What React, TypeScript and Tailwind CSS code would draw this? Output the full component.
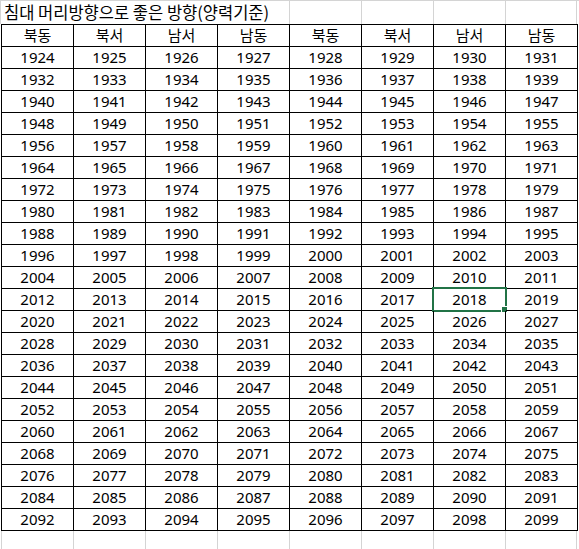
const heads = ["북동", "북서", "남서", "남동", "북동", "북서", "남서", "남동"];

const rows: number[][] = Array.from({ length: 22 }, (_, r) =>
  Array.from({ length: 8 }, (_, c) => 1924 + r * 8 + c)
);

const font = { fontFamily: '"Noto Sans", "Noto Sans CJK KR", sans-serif' };
const kr = { fontFamily: '"Noto Sans CJK KR", sans-serif' };

export default function App() {
  return (
    <div className="w-[579px] h-[549px] bg-white overflow-hidden text-black" style={font}>
      {/* title row, text runs over the first four cells */}
      <div className="flex h-[24px] border-t border-[#d4d4d4]">
        <div className="w-[289px] border-l border-[#d4d4d4] pl-[3px] text-[16.5px] leading-[22px] whitespace-nowrap" style={kr}>
          침대 머리방향으로 좋은 방향(양력기준)
        </div>
        {[0, 1, 2, 3].map((i) => (
          <div key={i} className={"w-[72px] border-l border-[#d4d4d4] " + (i === 3 ? "border-r" : "")} />
        ))}
      </div>

      <div className="ml-[1px] w-[577px] border-l border-t border-black grid grid-cols-[repeat(8,72px)]">
        {heads.map((h, i) => (
          <div key={i} className="h-[22px] border-r border-b border-black flex items-center justify-center text-[15px]" style={kr}>
            {h}
          </div>
        ))}
        {rows.map((row, r) =>
          row.map((n, c) => (
            <div key={n} className="relative h-[22px] border-r border-b border-black flex items-center justify-center text-[15px]">
              {n}
              {r === 11 && c === 6 && (
                <div className="absolute -left-[2px] -top-[2px] w-[75px] h-[25px] border-2 border-[#217346]">
                  <div className="absolute left-[67px] top-[17px] w-[7px] h-[7px] bg-[#217346] border border-white" />
                </div>
              )}
            </div>
          ))
        )}
      </div>

      {/* grid stubs below the table */}
      <div className="flex h-[18px] ml-[1px]">
        {[0, 1, 2, 3, 4, 5, 6, 7].map((i) => (
          <div key={i} className={"w-[72px] border-l border-[#d4d4d4] " + (i === 7 ? "border-r" : "")} />
        ))}
      </div>
    </div>
  );
}
